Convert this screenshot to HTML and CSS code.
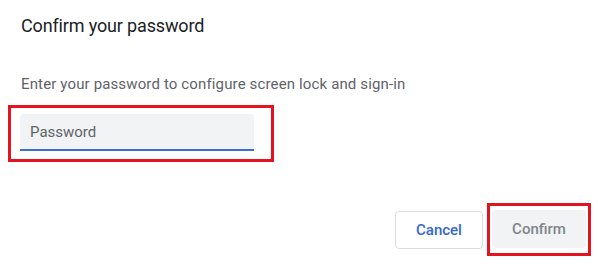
FILE: index.html
```html
<!DOCTYPE html>
<html>
<head>
<meta charset="utf-8">
<link rel="stylesheet" href="styles.css">
</head>
<body>
<div class="dialog">
  <h1 class="title">Confirm your password</h1>
  <p class="desc">Enter your password to configure screen lock and sign-in</p>
  <div class="highlight field-box">
    <div class="input"><span class="placeholder">Password</span></div>
  </div>
  <div class="footer">
    <button class="btn btn-cancel">Cancel</button>
    <div class="highlight btn-box">
      <button class="btn btn-confirm">Confirm</button>
    </div>
  </div>
</div>
</body>
</html>
```
FILE: styles.css
```css
html, body {
  margin: 0;
  padding: 0;
  background: #ffffff;
}
body {
  font-family: Roboto, "Noto Sans", sans-serif;
  width: 598px;
  height: 264px;
  overflow: hidden;
}
.dialog {
  padding: 14px 0 0 0;
}
.title {
  margin: 0 0 0 21px;
  font-size: 18px;
  letter-spacing: -0.15px;
  font-weight: 400;
  line-height: 24px;
  color: #202124;
}
.desc {
  margin: 36px 0 0 21px;
  font-size: 15px;
  letter-spacing: 0.14px;
  line-height: 20px;
  color: #5f6368;
}
.highlight {
  border: 3px solid #e3141f;
}
.field-box {
  margin: 11px 0 0 8px;
  width: 234px;
  padding: 6px 17px 8px 9px;
}
.input {
  height: 35px;
  background: #f1f3f4;
  border-radius: 4px 4px 0 0;
  border-bottom: 2px solid #3c6fd0;
  display: flex;
  align-items: center;
  padding-left: 10px;
}
.placeholder {
  font-size: 15px;
  color: #5f6368;
}
.footer {
  display: flex;
  justify-content: flex-end;
  align-items: center;
  margin-top: 41px;
  padding-right: 7px;
  gap: 4px;
}
.btn {
  font-family: Roboto, "Noto Sans", sans-serif;
  font-size: 15px;
  font-weight: 500;
  height: 38px;
  border-radius: 4px;
  cursor: pointer;
  padding: 0;
}
.btn-cancel {
  width: 88px;
  background: #ffffff;
  border: 1px solid #dadce0;
  color: #3367d6;
  margin-top: 1px;
}
.btn-box {
  padding: 4px 2px 5px 2px;
}
.btn-confirm {
  width: 94px;
  background: #f1f3f4;
  border: none;
  color: #80868b;
}
```
